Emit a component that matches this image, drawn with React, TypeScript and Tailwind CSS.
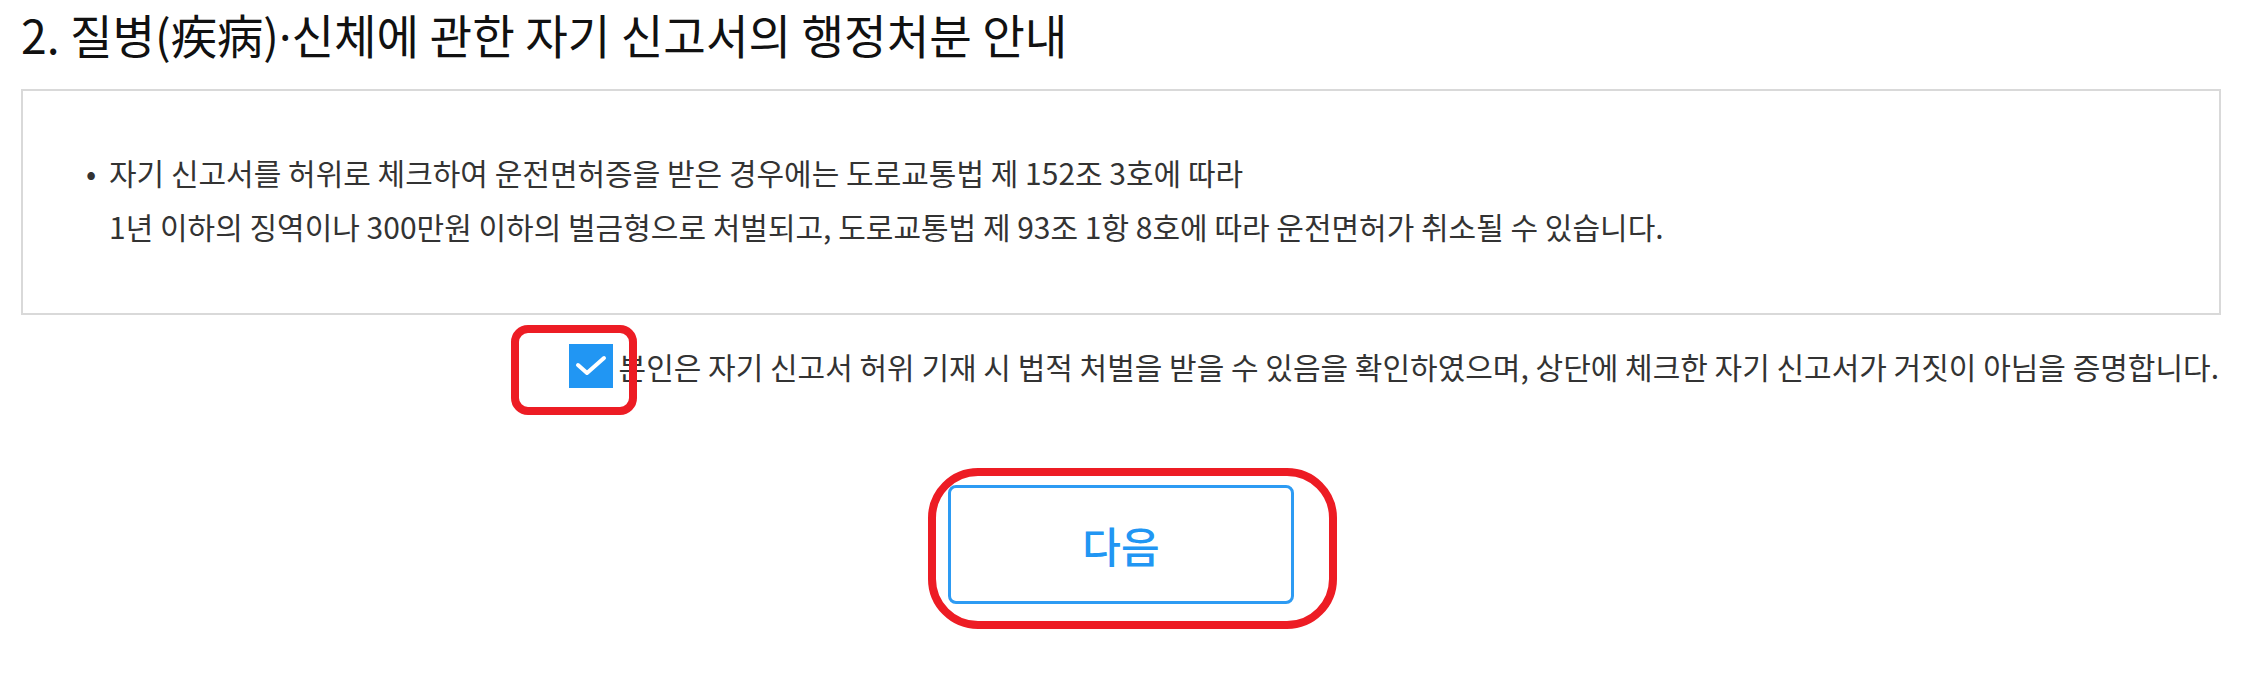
export default function App() {
  return (
    <div className="relative w-[2250px] h-[693px] bg-white text-[#333] overflow-hidden font-['Noto_Sans_CJK_KR','Noto_Sans',sans-serif]">
      <div className="pl-[21px] pr-[29px]">
        <h2 className="text-[46.3px] leading-[68px] text-[#111] font-normal whitespace-nowrap">
          2. 질병(疾病)<span className="font-['Noto_Sans',sans-serif]">·</span>신체에 관한 자기 신고서의 행정처분 안내
        </h2>
        <div className="mt-[18px] h-[226px] border-2 border-[#d9d9d9] flex flex-col justify-center pl-[63px] pb-[6px]">
          <div className="flex text-[30px] leading-[54px] text-[#333]">
            <span className="w-[23px] shrink-0 text-[30px]">•</span>
            <div className="whitespace-nowrap">
              <div>자기 신고서를 허위로 체크하여 운전면허증을 받은 경우에는 도로교통법 제 152조 3호에 따라</div>
              <div>1년 이하의 징역이나 300만원 이하의 벌금형으로 처벌되고, 도로교통법 제 93조 1항 8호에 따라 운전면허가 취소될 수 있습니다.</div>
            </div>
          </div>
        </div>
        <div className="mt-[29px] flex items-center justify-end gap-[6px] pr-[2px]">
          <div className="relative w-[44px] h-[44px] bg-[#2196f3] shrink-0">
            <svg viewBox="0 0 44 44" className="w-[44px] h-[44px]">
              <path d="M9 21 L18 29 L35 14" fill="none" stroke="white" strokeWidth="4" strokeLinecap="round" strokeLinejoin="round" />
            </svg>
            <div className="absolute left-[-58px] top-[-19px] w-[126px] h-[90px] border-[8px] border-[#ed1c24] rounded-[17px]" />
          </div>
          <span className="text-[30px] leading-[44px] text-[#333] whitespace-nowrap">
            본인은 자기 신고서 허위 기재 시 법적 처벌을 받을 수 있음을 확인하였으며, 상단에 체크한 자기 신고서가 거짓이 아님을 증명합니다.
          </span>
        </div>
        <div className="mt-[97px] flex justify-center">
          <button className="relative w-[346px] h-[119px] border-[3px] border-[#2d9bf3] rounded-[8px] bg-white text-[#2196f3] text-[42px] font-medium">
            다음
            <div className="absolute left-[-23px] top-[-20px] w-[409px] h-[161px] border-[8px] border-[#ed1c24] rounded-[50px]" />
          </button>
        </div>
      </div>
    </div>
  );
}
